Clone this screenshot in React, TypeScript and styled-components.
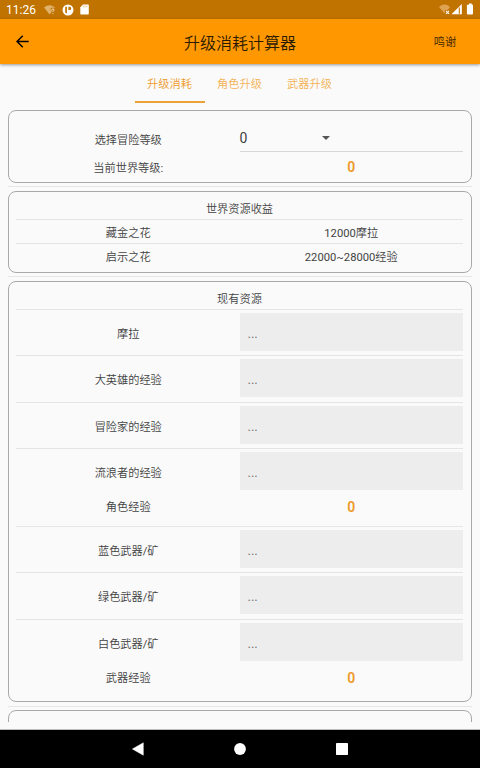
import React from "react";
import styled, { createGlobalStyle } from "styled-components";

const fontStack = `Roboto, "Noto Sans CJK SC DemiLight", "Noto Sans CJK SC", sans-serif`;

const GlobalStyle = createGlobalStyle`
  * { box-sizing: border-box; }
  body {
    margin: 0;
    background: #fafafa;
    font-family: ${fontStack};
    color: #424242;
  }
`;

const Screen = styled.div`
  width: 480px;
  height: 768px;
  display: flex;
  flex-direction: column;
  overflow: hidden;
`;

const StatusBar = styled.div`
  flex: none;
  height: 19px;
  padding: 0 6px 0 6px;
  display: flex;
  align-items: center;
  justify-content: space-between;
  background: #c17300;
  color: #fff;
`;

const Clock = styled.span`
  width: 38px;
  padding-top: 1px;
  font-size: 12px;
  line-height: 18px;
`;

const StatusIcons = styled.div`
  flex: 1;
  display: flex;
  align-items: center;
  gap: 6px;
`;

const AppBar = styled.header`
  flex: none;
  height: 45px;
  display: grid;
  grid-template-columns: 80px 1fr 80px;
  align-items: center;
  background: #ff9800;
  color: #2a1a00;
  box-shadow: 0 1px 3px rgba(0, 0, 0, 0.4);
  z-index: 1;
`;

const IconButton = styled.button`
  display: flex;
  width: 20px;
  height: 20px;
  margin-left: 12px;
  padding: 0;
  border: 0;
  background: none;
`;

const Title = styled.h1`
  margin: 0;
  padding-top: 4px;
  text-align: center;
  font-size: 16px;
  font-weight: 300;
  line-height: 24px;
`;

const Action = styled.button`
  width: 50px;
  margin: 0 0 0 20px;
  padding: 3px 0 0;
  border: 0;
  background: none;
  color: #3d2500;
  font: 300 11.2px/20px ${fontStack};
`;

const Tabs = styled.nav`
  flex: none;
  height: 46px;
  display: flex;
  justify-content: center;
  align-items: flex-start;
`;

const Tab = styled.button<{ $active?: boolean }>`
  width: 70px;
  height: 39px;
  padding: 4px 0 0;
  border: 0;
  border-bottom: 2px solid ${(p) => (p.$active ? "#eca136" : "transparent")};
  background: none;
  color: ${(p) => (p.$active ? "#ed9a2a" : "#f3b255")};
  font: 11.2px/18px ${fontStack};
`;

const TabStrip = styled.div`
  display: flex;
  margin-right: 1px;
`;

const Content = styled.main`
  flex: none;
  height: 612px;
  padding: 0 8px;
  overflow: hidden;
`;

const Card = styled.section<{ $height: number }>`
  height: ${(p) => p.$height}px;
  border: 1px solid #a9a9a9;
  border-radius: 8px;
  padding: 0 8px 0 7px;
`;

const Gap = styled.div<{ $before: number; $after: number }>`
  height: 1px;
  margin: ${(p) => p.$before}px 0 ${(p) => p.$after}px;
  background: #e6e6e6;
`;

const Divider = styled.div`
  height: 1px;
  background: #e4e4e4;
`;

const CardTitle = styled.h2`
  height: 27px;
  margin: 0;
  padding-top: 8px;
  text-align: center;
  font-size: 11.2px;
  font-weight: 400;
  line-height: 19px;
`;

const Row = styled.div<{ $height: number }>`
  display: grid;
  grid-template-columns: 1fr 1fr;
  height: ${(p) => p.$height}px;
  align-items: center;
  text-align: center;
  font-size: 11.2px;
  line-height: 18px;
`;

const Label = styled.span`
  padding: 4px 0 0 1px;
`;

const Amount = styled(Label)`
  padding-left: 0;
`;

const Value = styled.strong<{ $raised?: boolean }>`
  padding-top: ${(p) => (p.$raised ? 0 : 2)}px;
  color: #ee9928;
  font-size: 14px;
  font-weight: 600;
`;

const Field = styled.input`
  align-self: start;
  width: 100%;
  height: 38px;
  margin-top: 3px;
  padding: 2px 8px 0;
  border: 0;
  border-radius: 0;
  background: #ededed;
  font: 13px Roboto, sans-serif;
  outline: 0;
  &::placeholder {
    color: #757575;
    opacity: 1;
  }
`;

const Select = styled.div`
  height: 26px;
  display: flex;
  align-items: center;
  border-bottom: 1px solid #d6d6d6;
  font-size: 14px;
`;

const SelectedLevel = styled.span`
  width: 82px;
  text-align: left;
`;

const SelectRow = styled(Row)`
  margin-top: 14px;
`;

const NavBar = styled.footer`
  flex: none;
  height: 39px;
  margin-top: auto;
  border-top: 1px solid #bdbdbd;
  background: #000;
  display: flex;
  align-items: center;
  justify-content: center;
  gap: 90px;
`;

function FieldRow({ label, height }: { label: string; height: number }) {
  return (
    <Row $height={height}>
      <Label>{label}</Label>
      <Field placeholder="..." aria-label={label} />
    </Row>
  );
}

function WifiUnknownIcon() {
  return (
    <svg width="12" height="10" viewBox="0 0 12 10">
      <path d="M0 2.5Q5.5-2 11 2.5L5.6 9.4Z" fill="#dfb16b" />
      <path d="M7.4 5q.2-1.4 1.5-1.4T10.3 5q0 .8-1.3 1.6v.8M9 8.3v1" stroke="#c17300" strokeWidth="2.4" fill="none" />
      <path d="M7.7 5q.1-1.1 1.2-1.1T10.1 5q0 .7-1.2 1.5v.7M8.9 8.3v.9" stroke="#f4e2c6" strokeWidth=".95" fill="none" />
    </svg>
  );
}

function AppBadgeIcon() {
  return (
    <svg width="12" height="12" viewBox="0 0 12 12">
      <circle cx="6" cy="6" r="5.5" fill="#fff" />
      <path d="M3.2 2.8h1.7v6.7a4 4 0 0 1-1.7-1ZM6.4 2.8h1.2a1.6 1.6 0 0 1 0 3.3H6.4Z" fill="#c17300" />
    </svg>
  );
}

function SdCardIcon() {
  return (
    <svg width="9" height="11" viewBox="0 0 9 11">
      <path d="M3 .5h5a.8.8 0 0 1 .8.8v8.4a.8.8 0 0 1-.8.8H1.1a.8.8 0 0 1-.8-.8V3.3Z" fill="#fff" />
      <path d="M3.4 1.7v1.6M5.1 1.7v1.6M6.8 1.7v1.6" stroke="#d9a860" strokeWidth=".7" />
    </svg>
  );
}

export default function App() {
  return (
    <Screen>
      <GlobalStyle />
      <StatusBar>
        <Clock>11:26</Clock>
        <StatusIcons>
          <WifiUnknownIcon />
          <AppBadgeIcon />
          <SdCardIcon />
        </StatusIcons>
        <svg width="36" height="13" viewBox="0 0 36 13">
          <path d="M1 4Q6.5-.8 12 4L6.7 10.5Z" fill="#dfa354" />
          <path d="M6.8 7h5v5h-5Z" fill="#c17300" />
          <path d="m8 7.8 3 3m0-3-3 3" stroke="#fff" strokeWidth="1.1" />
          <path d="M13.5 11.2 23.8 1v10.2Z" fill="#fff" />
          <path d="M21.3 4.5v6.2" stroke="#c17300" strokeWidth="1.1" />
          <path d="M31 .6h2.8v1.2H35v8.8a.8.8 0 0 1-.8.8h-4.5a.8.8 0 0 1-.8-.8V1.8H31Z" fill="#fff" />
        </svg>
      </StatusBar>

      <AppBar>
        <IconButton aria-label="返回">
          <svg width="20" height="20" viewBox="0 0 20 20" fill="none" stroke="#000" strokeWidth="1.4">
            <path d="M16.7 9.5H5M10.8 3.7 5 9.5l5.8 5.8" />
          </svg>
        </IconButton>
        <Title>升级消耗计算器</Title>
        <Action>鸣谢</Action>
      </AppBar>

      <Tabs>
        <TabStrip>
          <Tab $active>升级消耗</Tab>
          <Tab>角色升级</Tab>
          <Tab>武器升级</Tab>
        </TabStrip>
      </Tabs>

      <Content>
        <Card $height={73}>
          <SelectRow $height={27}>
            <Label>选择冒险等级</Label>
            <Select>
              <SelectedLevel>0</SelectedLevel>
              <svg width="8" height="4" viewBox="0 0 8 4">
                <path d="M0 0h8L4 4Z" fill="#555" />
              </svg>
            </Select>
          </SelectRow>
          <Row $height={29}>
            <Label>当前世界等级:</Label>
            <Value $raised>0</Value>
          </Row>
        </Card>
        <Gap $before={3} $after={4} />

        <Card $height={82}>
          <CardTitle>世界资源收益</CardTitle>
          <Divider />
          <Row $height={23}>
            <Label>藏金之花</Label>
            <Amount>12000摩拉</Amount>
          </Row>
          <Divider />
          <Row $height={24}>
            <Label>启示之花</Label>
            <Amount>22000~28000经验</Amount>
          </Row>
        </Card>
        <Gap $before={3} $after={4} />

        <Card $height={421}>
          <CardTitle>现有资源</CardTitle>
          <Divider />
          <FieldRow label="摩拉" height={45} />
          <Divider />
          <FieldRow label="大英雄的经验" height={46} />
          <Divider />
          <FieldRow label="冒险家的经验" height={45} />
          <Divider />
          <FieldRow label="流浪者的经验" height={45} />
          <Row $height={24}>
            <Label>角色经验</Label>
            <Value>0</Value>
          </Row>
          <Gap $before={8} $after={0} />
          <FieldRow label="蓝色武器/矿" height={45} />
          <Divider />
          <FieldRow label="绿色武器/矿" height={46} />
          <Divider />
          <FieldRow label="白色武器/矿" height={45} />
          <Row $height={24}>
            <Label>武器经验</Label>
            <Value>0</Value>
          </Row>
        </Card>
        <Gap $before={4} $after={3} />
        <Card $height={100} />
      </Content>

      <NavBar>
        <svg width="12" height="14" viewBox="0 0 12 14">
          <path d="M11.3.8v12.4L.4 7Z" fill="#fff" stroke="#fff" strokeWidth=".5" strokeLinejoin="round" />
        </svg>
        <svg width="12" height="12" viewBox="0 0 12 12">
          <circle cx="6" cy="6" r="5.9" fill="#fff" />
        </svg>
        <svg width="12" height="12" viewBox="0 0 12 12">
          <rect width="12" height="12" rx=".7" fill="#fff" />
        </svg>
      </NavBar>
    </Screen>
  );
}
